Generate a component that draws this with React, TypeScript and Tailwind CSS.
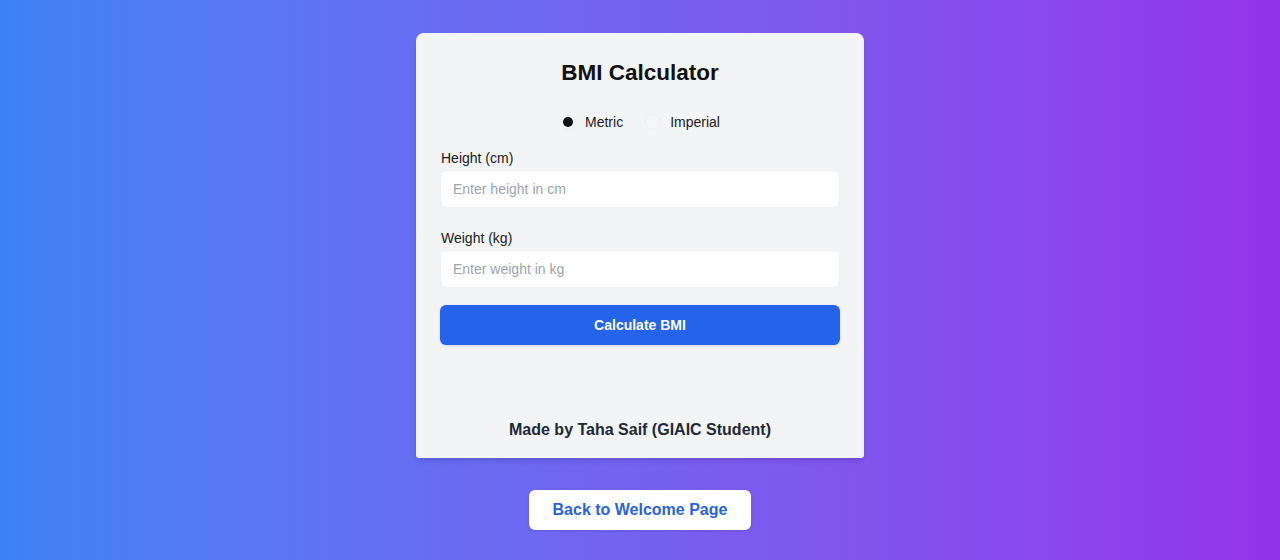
import { useState } from 'react'

export default function App() {
  const [unit, setUnit] = useState<'metric' | 'imperial'>('metric')

  const Radio = ({ value, label }: { value: 'metric' | 'imperial'; label: string }) => (
    <label className="flex items-center gap-[9px] cursor-pointer" onClick={() => setUnit(value)}>
      <span className="w-4 h-4 rounded-full border border-[#eceef1] bg-[#f5f6f8] flex items-center justify-center">
        {unit === value && <span className="w-[10px] h-[10px] rounded-full bg-[#111]" />}
      </span>
      <span className="text-sm text-[#1a1a1a]">{label}</span>
    </label>
  )

  return (
    <div
      className="min-h-screen w-full bg-gradient-to-r from-[#3b82f6] to-[#9333ea] flex flex-col items-center pt-[33px]"
      style={{ fontFamily: '"Liberation Sans", Arial, sans-serif' }}
    >
      <div className="w-[448px] bg-[#f3f4f6] rounded-t-lg rounded-b-[3px] shadow-md px-6 pt-6 pb-4">
        <h1 className="text-[22.5px] font-bold text-[#111] text-center leading-8">BMI Calculator</h1>

        <div className="flex justify-center items-center gap-[22px] mt-[21px] h-6">
          <Radio value="metric" label="Metric" />
          <Radio value="imperial" label="Imperial" />
        </div>

        <div className="mt-[14px]">
          <label className="block text-sm leading-5 text-[#1a1a1a] mb-[2px] pl-px">Height (cm)</label>
          <input
            type="number"
            placeholder="Enter height in cm"
            className="w-full h-[38px] px-3 text-sm bg-white border border-[#eef0f2] rounded-md placeholder-[#9ca3af] focus:outline-none"
          />
        </div>

        <div className="mt-5">
          <label className="block text-sm leading-5 text-[#1a1a1a] mb-[2px] pl-px">Weight (kg)</label>
          <input
            type="number"
            placeholder="Enter weight in kg"
            className="w-full h-[38px] px-3 text-sm bg-white border border-[#eef0f2] rounded-md placeholder-[#9ca3af] focus:outline-none"
          />
        </div>

        <button className="w-full h-10 mt-[17px] bg-[#2563eb] text-white text-sm font-bold rounded-md shadow-sm">
          Calculate BMI
        </button>

        <p className="mt-[73px] text-base leading-6 font-bold text-[#1f2937] text-center">
          Made by Taha Saif (GIAIC Student)
        </p>
      </div>

      <button className="mt-8 h-10 px-6 bg-white text-[#2b63d6] text-base font-bold rounded-md shadow-sm">
        Back to Welcome Page
      </button>
    </div>
  )
}
